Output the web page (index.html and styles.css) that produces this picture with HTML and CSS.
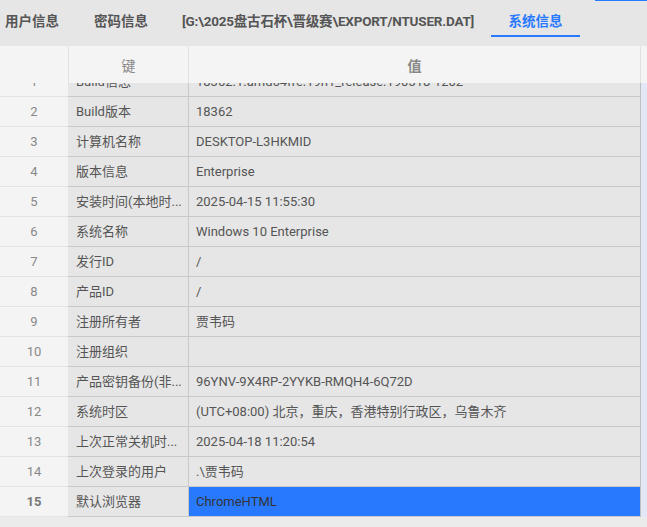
FILE: index.html
```html
<!DOCTYPE html>
<html lang="zh">
<head>
<meta charset="utf-8">
<title>系统信息</title>
<link rel="stylesheet" href="styles.css">
</head>
<body>
<div class="app">
  <div class="topline"></div>
  <nav class="tabs">
    <div class="tab">用户信息</div>
    <div class="tab">密码信息</div>
    <div class="tab path">[G:\2025盘古石杯\晋级赛\EXPORT/NTUSER.DAT]</div>
    <div class="tab active">系统信息</div>
  </nav>
  <div class="table">
    <div class="head">
      <div class="hcell num"></div>
      <div class="hcell key">键</div>
      <div class="hcell val">值</div>
      <div class="hstrip"></div>
    </div>
    <div class="body">
      <div class="rows">
        <div class="row"><div class="c num">1</div><div class="c key">Build信息</div><div class="c val">18362.1.amd64fre.19h1_release.190318-1202</div></div>
        <div class="row"><div class="c num">2</div><div class="c key">Build版本</div><div class="c val">18362</div></div>
        <div class="row"><div class="c num">3</div><div class="c key">计算机名称</div><div class="c val">DESKTOP-L3HKMID</div></div>
        <div class="row"><div class="c num">4</div><div class="c key">版本信息</div><div class="c val">Enterprise</div></div>
        <div class="row"><div class="c num">5</div><div class="c key">安装时间(本地时...</div><div class="c val">2025-04-15 11:55:30</div></div>
        <div class="row"><div class="c num">6</div><div class="c key">系统名称</div><div class="c val">Windows 10 Enterprise</div></div>
        <div class="row"><div class="c num">7</div><div class="c key">发行ID</div><div class="c val">/</div></div>
        <div class="row"><div class="c num">8</div><div class="c key">产品ID</div><div class="c val">/</div></div>
        <div class="row"><div class="c num">9</div><div class="c key">注册所有者</div><div class="c val">贾韦码</div></div>
        <div class="row"><div class="c num">10</div><div class="c key">注册组织</div><div class="c val"></div></div>
        <div class="row"><div class="c num">11</div><div class="c key">产品密钥备份(非...</div><div class="c val">96YNV-9X4RP-2YYKB-RMQH4-6Q72D</div></div>
        <div class="row"><div class="c num">12</div><div class="c key">系统时区</div><div class="c val">(UTC+08:00) 北京，重庆，香港特别行政区，乌鲁木齐</div></div>
        <div class="row"><div class="c num">13</div><div class="c key">上次正常关机时...</div><div class="c val">2025-04-18 11:20:54</div></div>
        <div class="row"><div class="c num">14</div><div class="c key">上次登录的用户</div><div class="c val">.\贾韦码</div></div>
        <div class="row sel"><div class="c num">15</div><div class="c key">默认浏览器</div><div class="c val">ChromeHTML</div></div>
      </div>
      <div class="vstrip"></div>
    </div>
  </div>
</div>
</body>
</html>
```
FILE: styles.css
```css
* { box-sizing: border-box; }
html, body { margin: 0; padding: 0; }
body {
  width: 647px;
  height: 527px;
  overflow: hidden;
  background: #ebebeb;
  font-family: Roboto, "Noto Sans CJK SC", sans-serif;
  color: #555;
}
.app { position: relative; width: 647px; height: 527px; }
.topline {
  position: absolute;
  top: 0; right: 0;
  width: 52px; height: 1px;
  background: #2979ff;
}
.tabs {
  height: 46px;
  background: #e6e6e6;
  display: flex;
  align-items: flex-start;
}
.tab {
  font-size: 13.5px;
  font-weight: bold;
  color: #555;
  line-height: 20px;
  padding-top: 11px;
  height: 37px;
  white-space: nowrap;
  border-bottom: 2px solid transparent;
}
.tab:nth-child(1) { padding-left: 5px; width: 94px; }
.tab:nth-child(2) { width: 88px; }
.tab.path { width: 309px; letter-spacing: -0.2px; }
.tab.active {
  color: #2979ff;
  border-bottom-color: #2979ff;
  width: 89px;
  text-align: center;
}
.table { width: 647px; }
.head {
  display: flex;
  height: 37px;
  background: #f4f4f4;
}
.hcell {
  font-size: 14px;
  color: #888;
  display: flex;
  align-items: center;
  justify-content: center;
  border-right: 1px solid #e2e2e2;
  height: 37px;
}
.hcell.num { width: 69px; }
.hcell.key { width: 120px; }
.hcell.val { width: 452px; font-weight: bold; border-right: 1px solid #e0e0e0; }
.hstrip { width: 6px; }
.body {
  display: flex;
  height: 444px;
  overflow: hidden;
}
.rows {
  width: 641px;
  margin-top: -16px;
}
.vstrip {
  width: 6px;
  background: #e2e8f5;
  margin-top: -4px;
  height: 438px;
}
.row {
  display: flex;
  height: 30px;
  font-size: 13px;
}
.c {
  height: 30px;
  line-height: 30px;
  border-bottom: 1px solid #c9c9c9;
  white-space: nowrap;
  overflow: hidden;
}
.c.num {
  width: 68px;
  background: #f4f4f4;
  color: #888;
  text-align: center;
  border-bottom: 1px solid #e4e4e4;
}
.c.key {
  width: 121px;
  background: #e6e6e6;
  padding-left: 8px;
  padding-right: 2px;
  border-right: 1px solid #c9c9c9;
}
.c.val {
  width: 452px;
  background: #e6e6e6;
  padding-left: 7px;
  border-right: 1px solid #c0c0c0;
}
.row.sel .c.num { font-weight: bold; color: #777; }
.row.sel .c.val { background: #2979ff; color: #333; }
```
